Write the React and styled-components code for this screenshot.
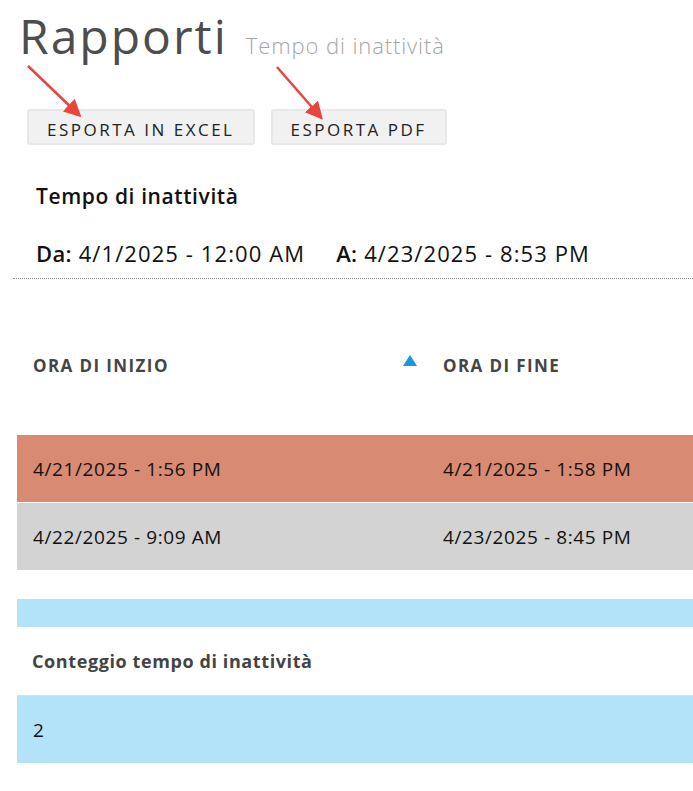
import React from 'react';
import styled, { createGlobalStyle } from 'styled-components';

const GlobalStyle = createGlobalStyle`
  body {
    margin: 0;
    background: #ffffff;
    font-family: "Open Sans", "Noto Sans", sans-serif;
    overflow: hidden;
  }
`;

const rows = [
  { id: 1, start: '4/21/2025 - 1:56 PM', end: '4/21/2025 - 1:58 PM', tone: 'alert' },
  { id: 2, start: '4/22/2025 - 9:09 AM', end: '4/23/2025 - 8:45 PM', tone: 'muted' },
];

const App = () => (
  <>
    <GlobalStyle />
    <Page>
      <Arrows width="340" height="130">
        <defs>
          <marker id="head" markerWidth="7" markerHeight="7" refX="4" refY="3.5" orient="auto">
            <path d="M0,0 L7,3.5 L0,7 Z" fill="#e8453c" />
          </marker>
        </defs>
        <line x1="28" y1="66" x2="76" y2="112" stroke="#e8453c" strokeWidth="2.5" markerEnd="url(#head)" />
        <line x1="277" y1="67" x2="318" y2="114" stroke="#e8453c" strokeWidth="2.5" markerEnd="url(#head)" />
      </Arrows>
      <Header>
        <Title>Rapporti</Title>
        <Subtitle>Tempo di inattività</Subtitle>
      </Header>
      <Toolbar>
        <ExportButton>ESPORTA IN EXCEL</ExportButton>
        <ExportButton>ESPORTA PDF</ExportButton>
      </Toolbar>
      <ReportName>Tempo di inattività</ReportName>
      <Range>
        <RangeItem><b>Da:</b> 4/1/2025 - 12:00 AM</RangeItem>
        <RangeItem><b>A:</b> 4/23/2025 - 8:53 PM</RangeItem>
      </Range>
      <Divider />
      <Table>
        <HeadRow>
          <HeadCell>
            ORA DI INIZIO
            <SortArrow />
          </HeadCell>
          <HeadCell>ORA DI FINE</HeadCell>
        </HeadRow>
        {rows.map(r => (
          <Row key={r.id} tone={r.tone}>
            <Cell>{r.start}</Cell>
            <Cell>{r.end}</Cell>
          </Row>
        ))}
      </Table>
      <SummaryBar />
      <SummaryLabel>Conteggio tempo di inattività</SummaryLabel>
      <SummaryValue>2</SummaryValue>
    </Page>
  </>
);

const Page = styled.div`
  position: relative;
  width: 693px;
  padding-top: 6px;
`;

const Arrows = styled.svg`
  position: absolute;
  left: 0;
  top: 0;
  pointer-events: none;
`;

const Header = styled.div`
  display: flex;
  align-items: baseline;
  padding-left: 19px;
  height: 66px;
`;

const Title = styled.h1`
  margin: 0;
  font-weight: 400;
  font-size: 48px;
  letter-spacing: 2px;
  color: #4d4d4d;
  line-height: 60px;
`;

const Subtitle = styled.span`
  margin-left: 18px;
  font-size: 22px;
  font-weight: 300;
  color: #a5a5a5;
  letter-spacing: 0.9px;
`;

const Toolbar = styled.div`
  display: flex;
  gap: 16px;
  padding: 37px 0 0 27px;
`;

const ExportButton = styled.button`
  height: 36px;
  padding: 5px 18px 0;
  border: 2px solid #e8e8e8;
  border-radius: 3px;
  background: #f1f1f1;
  color: #222;
  font-family: "Open Sans", "Noto Sans", sans-serif;
  font-size: 17px;
  letter-spacing: 2.5px;
`;

const ReportName = styled.div`
  padding: 37px 0 0 36px;
  font-size: 21px;
  font-weight: 600;
  color: #111;
  line-height: 28px;
  letter-spacing: 0.6px;
`;

const Range = styled.div`
  display: flex;
  gap: 31px;
  padding: 29px 0 0 36px;
  font-size: 22px;
  color: #111;
  line-height: 28px;
  height: 28px;
  letter-spacing: 1.1px;
  b { font-weight: 600; letter-spacing: 0.3px; }
`;

const RangeItem = styled.span``;

const Divider = styled.hr`
  margin: 11px 0 0 13px;
  border: none;
  border-top: 1px dotted #8a8a8a;
`;

const Table = styled.div`
  margin: 43px 0 0 17px;
`;

const HeadRow = styled.div`
  display: grid;
  grid-template-columns: 410px 1fr;
  height: 113px;
  align-items: start;
  padding-top: 32px;
  box-sizing: border-box;
`;

const HeadCell = styled.div`
  position: relative;
  padding-left: 16px;
  font-size: 17px;
  font-weight: 700;
  color: #454545;
  line-height: 24px;
  letter-spacing: 1.4px;
`;

const SortArrow = styled.span`
  position: absolute;
  right: 10px;
  top: 1px;
  width: 0;
  height: 0;
  border-left: 7px solid transparent;
  border-right: 7px solid transparent;
  border-bottom: 11px solid #1a96dc;
`;

const Row = styled.div`
  display: grid;
  grid-template-columns: 410px 1fr;
  align-items: center;
  height: 67px;
  margin-bottom: 1px;
  background: ${p => (p.tone === 'alert' ? '#d98a73' : '#d3d3d3')};
`;

const Cell = styled.div`
  padding-left: 16px;
  font-size: 19px;
  color: #111;
  letter-spacing: 0.6px;
`;

const SummaryBar = styled.div`
  margin: 29px 0 0 17px;
  height: 28px;
  background: #b3e3f9;
`;

const SummaryLabel = styled.div`
  margin-left: 17px;
  height: 68px;
  display: flex;
  align-items: center;
  padding-left: 15px;
  font-size: 18px;
  font-weight: 700;
  color: #444;
  letter-spacing: 0.6px;
  border-bottom: 1px solid #ddd;
`;

const SummaryValue = styled.div`
  margin-left: 17px;
  height: 67px;
  display: flex;
  align-items: center;
  padding-left: 16px;
  font-size: 19px;
  color: #111;
  background: #b3e3f9;
`;

export default App;
